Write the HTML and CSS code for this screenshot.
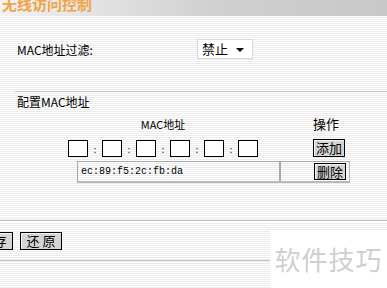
FILE: index.html
```html
<!DOCTYPE html>
<html lang="zh-CN">
<head>
  <meta charset="UTF-8">
  <title>无线访问控制</title>
  <link rel="stylesheet" href="styles.css">
</head>
<body>

<div class="title-bar">
  <h1>无线访问控制</h1>
</div>

<div class="filter-row">
  <span class="filter-label">MAC地址过滤:</span>
  <div class="select-box">禁止 <span class="arrow"></span></div>
</div>

<div class="section-line"></div>
<div class="section-title">配置MAC地址</div>

<div class="mac-head">
  <span class="head-mac">MAC地址</span>
  <span class="head-op">操作</span>
</div>

<div class="mac-inputs">
  <span class="mac-box"></span><span class="colon">:</span>
  <span class="mac-box"></span><span class="colon">:</span>
  <span class="mac-box"></span><span class="colon">:</span>
  <span class="mac-box"></span><span class="colon">:</span>
  <span class="mac-box"></span><span class="colon">:</span>
  <span class="mac-box"></span>
  <button class="btn add-btn">添加</button>
</div>

<div class="mac-list">
  <div class="mac-cell">ec:89:f5:2c:fb:da</div>
  <div class="op-cell"><button class="btn">删除</button></div>
</div>

<div class="bottom-line"></div>
<div class="actions">
  <button class="btn wide">保 存</button>
  <button class="btn wide">还 原</button>
</div>
<div class="end-line"></div>

<div class="watermark">软件技巧</div>

</body>
</html>
```

FILE: styles.css
```css
body {
  margin: 0;
  height: 288px;
  overflow: hidden;
  position: relative;
  font-family: "Noto Sans CJK SC", sans-serif;
  font-size: 12px;
  color: #000;
  background: repeating-linear-gradient(#fff 0 1px, #ebebeb 1px 2px);
}

.title-bar {
  height: 16px;
  overflow: hidden;
  background: linear-gradient(to right, #f2f2f2, #d0d0d0 55%, #c8c8c8);
}

.title-bar h1 {
  margin: -6px 0 0 2px;
  font-size: 15px;
  line-height: 20px;
  font-weight: bold;
  color: #f0a446;
}

.filter-row {
  display: flex;
  align-items: center;
  margin-top: 23px;
  padding-left: 17px;
  height: 20px;
}

.filter-label {
  width: 180px;
}

.select-box {
  width: 50px;
  height: 18px;
  border: 1px solid #d8d8d8;
  background: #fff;
  font-size: 13px;
  line-height: 18px;
  padding-left: 4px;
  display: flex;
  align-items: center;
  gap: 8px;
}

.arrow {
  width: 0;
  height: 0;
  border-left: 4px solid transparent;
  border-right: 4px solid transparent;
  border-top: 4px solid #000;
  margin-top: 2px;
}

.section-line {
  margin: 32px 0 0 15px;
  border-top: 1px solid #c4c4c4;
  border-bottom: 1px solid #fff;
}

.section-title {
  padding-left: 17px;
  margin-top: 2px;
  line-height: 14px;
}

.mac-head {
  display: flex;
  margin: 8px 0 0 68px;
  line-height: 14px;
}

.head-mac {
  width: 190px;
  text-align: center;
  font-size: 11px;
}

.head-op {
  margin-left: 55px;
  font-size: 13px;
}

.mac-inputs {
  display: flex;
  align-items: center;
  margin: 8px 0 0 68px;
  height: 18px;
}

.mac-box {
  width: 18px;
  height: 15px;
  border: 1px solid #000;
  background: #fff;
}

.colon {
  width: 14px;
  text-align: center;
  font-size: 9px;
  color: #222;
  line-height: 15px;
  padding-top: 3px;
}

.btn {
  font-family: "Noto Sans CJK SC", sans-serif;
  font-size: 13px;
  line-height: 14px;
  height: 18px;
  width: 32px;
  padding: 0;
  background: #d4d4d4;
  border: 1px solid #000;
  box-shadow: inset 1px 1px 0 #f4f4f4;
  color: #000;
}

.add-btn {
  margin-left: 55px;
}

.mac-list {
  display: flex;
  margin: 4px 0 0 77px;
  width: 271px;
  height: 19px;
  border: 1px solid #a8a8a8;
  border-bottom: 2px solid #b8b8b8;
  border-right-color: #b8b8b8;
}

.mac-cell {
  width: 198px;
  padding-left: 3px;
  border-right: 2px solid #a8a8a8;
  font-family: "Liberation Mono", monospace;
  font-size: 10px;
  line-height: 19px;
}

.op-cell {
  flex: 1;
  display: flex;
  justify-content: flex-end;
  align-items: center;
  padding-right: 3px;
}

.op-cell .btn {
  height: 17px;
}

.bottom-line {
  margin-top: 37px;
  border-top: 1px solid #c4c4c4;
  border-bottom: 1px solid #fff;
}

.actions {
  display: flex;
  gap: 7px;
  margin: 10px 0 0 -29px;
}

.btn.wide {
  width: 42px;
}

.end-line {
  margin-top: 10px;
  border-top: 1px solid #c4c4c4;
}

.watermark {
  position: absolute;
  right: 0;
  bottom: 0;
  width: 117px;
  height: 58px;
  background: #fff;
  color: #cfcfcf;
  font-size: 26px;
  line-height: 58px;
  text-align: center;
  letter-spacing: 1px;
}
```
